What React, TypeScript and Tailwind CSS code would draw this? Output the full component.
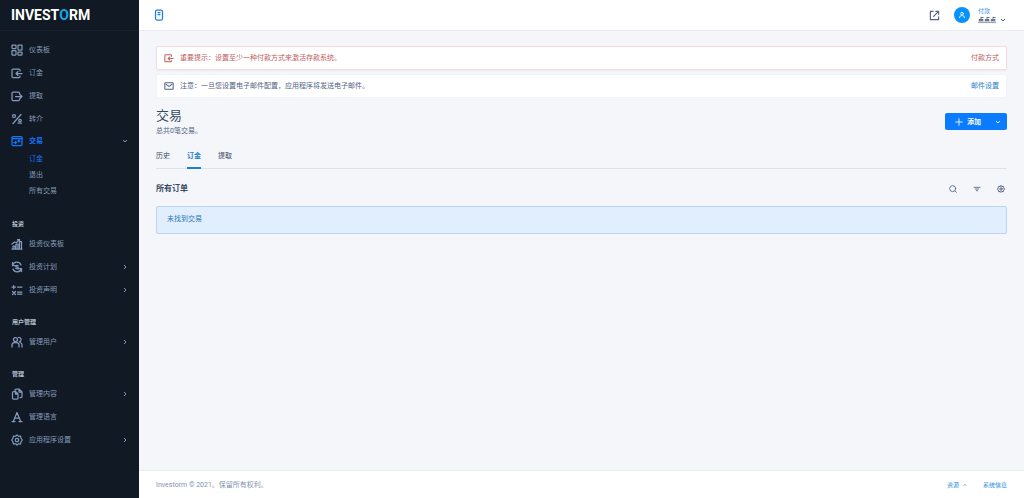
import type { ReactNode } from "react";

type IconName =
  | "grid" | "walletIn" | "walletOut" | "percent" | "tranx" | "growth" | "invest"
  | "offer" | "users" | "copy" | "text" | "gear" | "mail" | "external" | "user"
  | "search" | "filter" | "plus" | "toggle" | "down" | "up" | "right";

const shapes: Record<IconName, ReactNode> = {
  grid: (
    <>
      <rect x="2" y="2" width="8" height="7" rx="1" />
      <rect x="14" y="2" width="8" height="10" rx="1" />
      <rect x="2" y="13" width="8" height="9" rx="1" />
      <rect x="14" y="16" width="8" height="6" rx="1" />
    </>
  ),
  walletIn: <path d="M18 8V6a2 2 0 0 0-2-2H4a2 2 0 0 0-2 2v13a2 2 0 0 0 2 2h12a2 2 0 0 0 2-2v-1M22 13H10m4-4-4 4 4 4" />,
  walletOut: <path d="M17 8V6a2 2 0 0 0-2-2H4a2 2 0 0 0-2 2v13a2 2 0 0 0 2 2h11a2 2 0 0 0 2-2v-1M9 13h13m-4-4 4 4-4 4" />,
  percent: (
    <>
      <circle cx="6" cy="6" r="3" />
      <path d="M20 3 4 21M14 20h7" />
      <circle cx="18" cy="15" r="2.500" />
    </>
  ),
  tranx: (
    <>
      <rect x="2" y="3" width="20" height="18" rx="2" />
      <path d="M2 7h20M6 15h5m-2-2 2 2-2 2M18 12h-4m2-2-2 2 2 2" />
    </>
  ),
  growth: <path d="M2 22h20M4 22v-6h4v6M10 22V12h4v10M17 22V7h4v15M2 12l5-4 4 1 6-6m-4 0h4v4" />,
  invest: <path d="M3 9a9 9 0 0 1 17-1M3 3v6h6M21 15a9 9 0 0 1-17 1M21 21v-6h-6M14.500 10c-1-1.500-5-1.500-5 .5s5 1.500 5 3.500-4 2-5 .2" />,
  offer: <path d="M2 6h7M5.500 3v6M13 6h9M13 16h9M13 20h9M3 15l6 6M9 15l-6 6" />,
  users: (
    <>
      <circle cx="9" cy="7" r="4" />
      <path d="M2 22v-4a5 5 0 0 1 5-5h4a5 5 0 0 1 5 5v4M15 3a4 4 0 0 1 2 8M18 13a5 5 0 0 1 4 5v4" />
    </>
  ),
  copy: <path d="M8 5V4a2 2 0 0 1 2-2h6l6 6v9a2 2 0 0 1-2 2h-2M3 9a2 2 0 0 1 2-2h4l5 5v8a2 2 0 0 1-2 2H5a2 2 0 0 1-2-2zM9 7v5h5M16 2v6h6" />,
  text: <path d="M5 20 12 3l7 17M8 14h8M2 21h6M16 21h6" />,
  gear: (
    <>
      <path d="m12 2 3 2.500 4-.5 1 4 2.500 4-2.500 4-1 4-4-.5-3 2.500-3-2.500-4 .5-1-4L1.500 12 4 8l1-4 4 .5z" />
      <circle cx="12" cy="12" r="3.500" />
    </>
  ),
  mail: (
    <>
      <rect x="2" y="4" width="20" height="16" rx="1.500" />
      <path d="m5 8 7 5 7-5" />
    </>
  ),
  external: <path d="M9 3H3v18h18v-6M15 3h6v6M21 3 10 14" />,
  user: (
    <>
      <circle cx="12" cy="8" r="4" />
      <path d="M5 20v-2a5 5 0 0 1 5-4h4a5 5 0 0 1 5 4v2" />
    </>
  ),
  search: (
    <>
      <circle cx="11" cy="11" r="9" />
      <path d="m18 18 4 4" />
    </>
  ),
  filter: <path d="M3 7h18M7 12h10M10 17h4" />,
  plus: <path d="M12 2v20M2 12h20" />,
  toggle: (
    <>
      <rect x="5" y="2" width="14" height="20" rx="3" />
      <path d="M10 7h4M10 11h4" />
    </>
  ),
  down: <path d="m5 9 7 7 7-7" />,
  up: <path d="m5 15 7-7 7 7" />,
  right: <path d="m9 5 7 7-7 7" />,
};

function Icon({ name, className = "" }: { name: IconName; className?: string }) {
  return (
    <svg
      viewBox="0 0 24 24"
      fill="none"
      stroke="currentColor"
      strokeWidth={2.5}
      strokeLinecap="round"
      strokeLinejoin="round"
      aria-hidden="true"
      className={`shrink-0 ${className}`}
    >
      {shapes[name]}
    </svg>
  );
}

type Item = { icon: IconName; label: string; more?: boolean };

function NavItem({ icon, label, more }: Item) {
  return (
    <li>
      <a href="#" className="flex h-[23px] items-center gap-1.5 px-[11px] text-[#8599b8]">
        <Icon name={icon} className="size-3" />
        <span className="flex-1">{label}</span>
        {more && <Icon name="right" className="size-1.5 stroke-4" />}
      </a>
    </li>
  );
}

function NavGroup({ title, items }: { title: string; items: Item[] }) {
  return (
    <section>
      <h2 className="px-3 pt-4 pb-[3px] text-[6px] leading-[10px] font-bold text-[#b7c2d0]">{title}</h2>
      <ul>
        {items.map((item) => (
          <NavItem key={item.label} {...item} />
        ))}
      </ul>
    </section>
  );
}

function Sidebar() {
  return (
    <aside className="w-[139px] shrink-0 bg-[#101924]">
      <a
        href="#"
        className="flex h-[31px] items-center border-b border-[#18212d] px-[11px] text-[14px] leading-none font-bold text-white"
      >
        <span>INVEST</span>
        <span className="text-[#0fa8ea]">O</span>
        <span>RM</span>
      </a>
      <nav className="pt-[7px]">
        <ul>
          <NavItem icon="grid" label="仪表板" />
          <NavItem icon="walletIn" label="订金" />
          <NavItem icon="walletOut" label="提取" />
          <NavItem icon="percent" label="转介" />
          <li>
            <a href="#" className="flex h-[21px] items-center gap-1.5 px-[11px] font-bold text-[#1676fb]">
              <Icon name="tranx" className="size-3" />
              <span className="flex-1">交易</span>
              <Icon name="down" className="size-1.5 stroke-4 text-[#8599b8]" />
            </a>
            <ul className="pb-1 pl-[29px] leading-4 text-[#8599b8]">
              <li><a href="#" className="block text-[#1676fb]">订金</a></li>
              <li><a href="#" className="block">退出</a></li>
              <li><a href="#" className="block">所有交易</a></li>
            </ul>
          </li>
        </ul>
        <NavGroup
          title="投资"
          items={[
            { icon: "growth", label: "投资仪表板" },
            { icon: "invest", label: "投资计划", more: true },
            { icon: "offer", label: "投资声明", more: true },
          ]}
        />
        <NavGroup title="用户管理" items={[{ icon: "users", label: "管理用户", more: true }]} />
        <NavGroup
          title="管理"
          items={[
            { icon: "copy", label: "管理内容", more: true },
            { icon: "text", label: "管理语言" },
            { icon: "gear", label: "应用程序设置", more: true },
          ]}
        />
      </nav>
    </aside>
  );
}

function Header() {
  return (
    <header className="flex h-[31px] items-center border-b border-[#e9edf3] bg-white pr-[18px] pl-[14px]">
      <button type="button" aria-label="菜单" className="text-[#1c7fe0]">
        <Icon name="toggle" className="size-3" />
      </button>
      <div className="ml-auto flex items-center">
        <a href="#" aria-label="打开网站" className="mr-3.5 text-[#526484]">
          <Icon name="external" className="size-[11px]" />
        </a>
        <button type="button" className="flex items-center gap-2 text-left">
          <span className="flex size-4 items-center justify-center rounded-full bg-[#0792fb] text-white">
            <Icon name="user" className="size-2" />
          </span>
          <span className="text-[6px] leading-[9px]">
            <span className="block text-[#2a8fe8]">付款</span>
            <span className="flex items-center gap-1 font-bold text-[#4b5c76]">
              点点点
              <Icon name="down" className="size-1.5 stroke-4" />
            </span>
          </span>
        </button>
      </div>
    </header>
  );
}

function Main() {
  return (
    <main className="flex-1 px-[17px] pt-[15px]">
      <div className="flex flex-col gap-1">
        <div className="flex h-6 items-center gap-1.5 rounded-xs border border-[#f7dcdc] bg-white px-[7px] text-[#c0605f] shadow-xs">
          <Icon name="walletIn" className="size-2.5" />
          <p className="flex-1">重要提示：设置至少一种付款方式来激活存款系统。</p>
          <a href="#">付款方式</a>
        </div>
        <div className="flex h-6 items-center gap-1.5 rounded-xs border border-[#f0f3f8] bg-white px-[7px] text-[#526484]">
          <Icon name="mail" className="size-2.5" />
          <p className="flex-1">注意：一旦您设置电子邮件配置，应用程序将发送电子邮件。</p>
          <a href="#" className="text-[#2582cc]">邮件设置</a>
        </div>
      </div>

      <div className="mt-2 flex items-center justify-between">
        <div>
          <h1 className="text-[13px] leading-[19px] text-[#364a63]">交易</h1>
          <p className="leading-3 text-[#526484]">总共0笔交易。</p>
        </div>
        <div className="flex h-[17px] items-center rounded-xs bg-[#0b7bff] text-white">
          <button type="button" className="flex h-full items-center gap-1 pl-2.5 font-bold">
            <Icon name="plus" className="size-2" />
            添加
          </button>
          <button type="button" aria-label="更多选项" className="h-full pr-1.5 pl-3.5">
            <Icon name="down" className="size-1.5 stroke-4" />
          </button>
        </div>
      </div>

      <nav className="mt-[7px] flex gap-[17px] border-b border-[#dbe2ec] text-[#364a63]">
        <a href="#" className="h-6 leading-6">历史</a>
        <a href="#" aria-current="page" className="-mb-px h-[25px] border-b-2 border-[#1c7fd6] leading-6 font-bold text-[#1c7fd6]">订金</a>
        <a href="#" className="h-6 leading-6">提取</a>
      </nav>

      <div className="mt-3 flex h-4 items-center justify-between">
        <h2 className="text-[8px] font-bold text-[#364a63]">所有订单</h2>
        <div className="flex items-center gap-4 pr-0.5 text-[#526484]">
          <button type="button" aria-label="搜索"><Icon name="search" className="size-2" /></button>
          <button type="button" aria-label="筛选"><Icon name="filter" className="size-2" /></button>
          <button type="button" aria-label="设置"><Icon name="gear" className="size-2 stroke-3" /></button>
        </div>
      </div>

      <p className="mt-[9px] rounded-xs border border-[#bdd5f0] bg-[#e1eefe] px-2.5 pt-1.5 pb-2 leading-3 text-[#2878b8]">
        未找到交易
      </p>
    </main>
  );
}

export default function App() {
  return (
    <div className="flex min-h-screen bg-[#f4f6fa] font-['Roboto','Noto_Sans_CJK_SC',sans-serif] text-[7px] leading-3">
      <Sidebar />
      <div className="flex min-w-0 flex-1 flex-col">
        <Header />
        <Main />
        <footer className="flex h-7 items-center justify-between border-t border-[#e9edf3] bg-white px-[17px] text-[#8094ae]">
          <p>Investorm © 2021。保留所有权利。</p>
          <div className="flex items-center gap-4 text-[6px] text-[#2a8fd8]">
            <button type="button" className="flex items-center gap-1">
              资源
              <Icon name="up" className="size-1 stroke-4" />
            </button>
            <a href="#">系统信息</a>
          </div>
        </footer>
      </div>
    </div>
  );
}
